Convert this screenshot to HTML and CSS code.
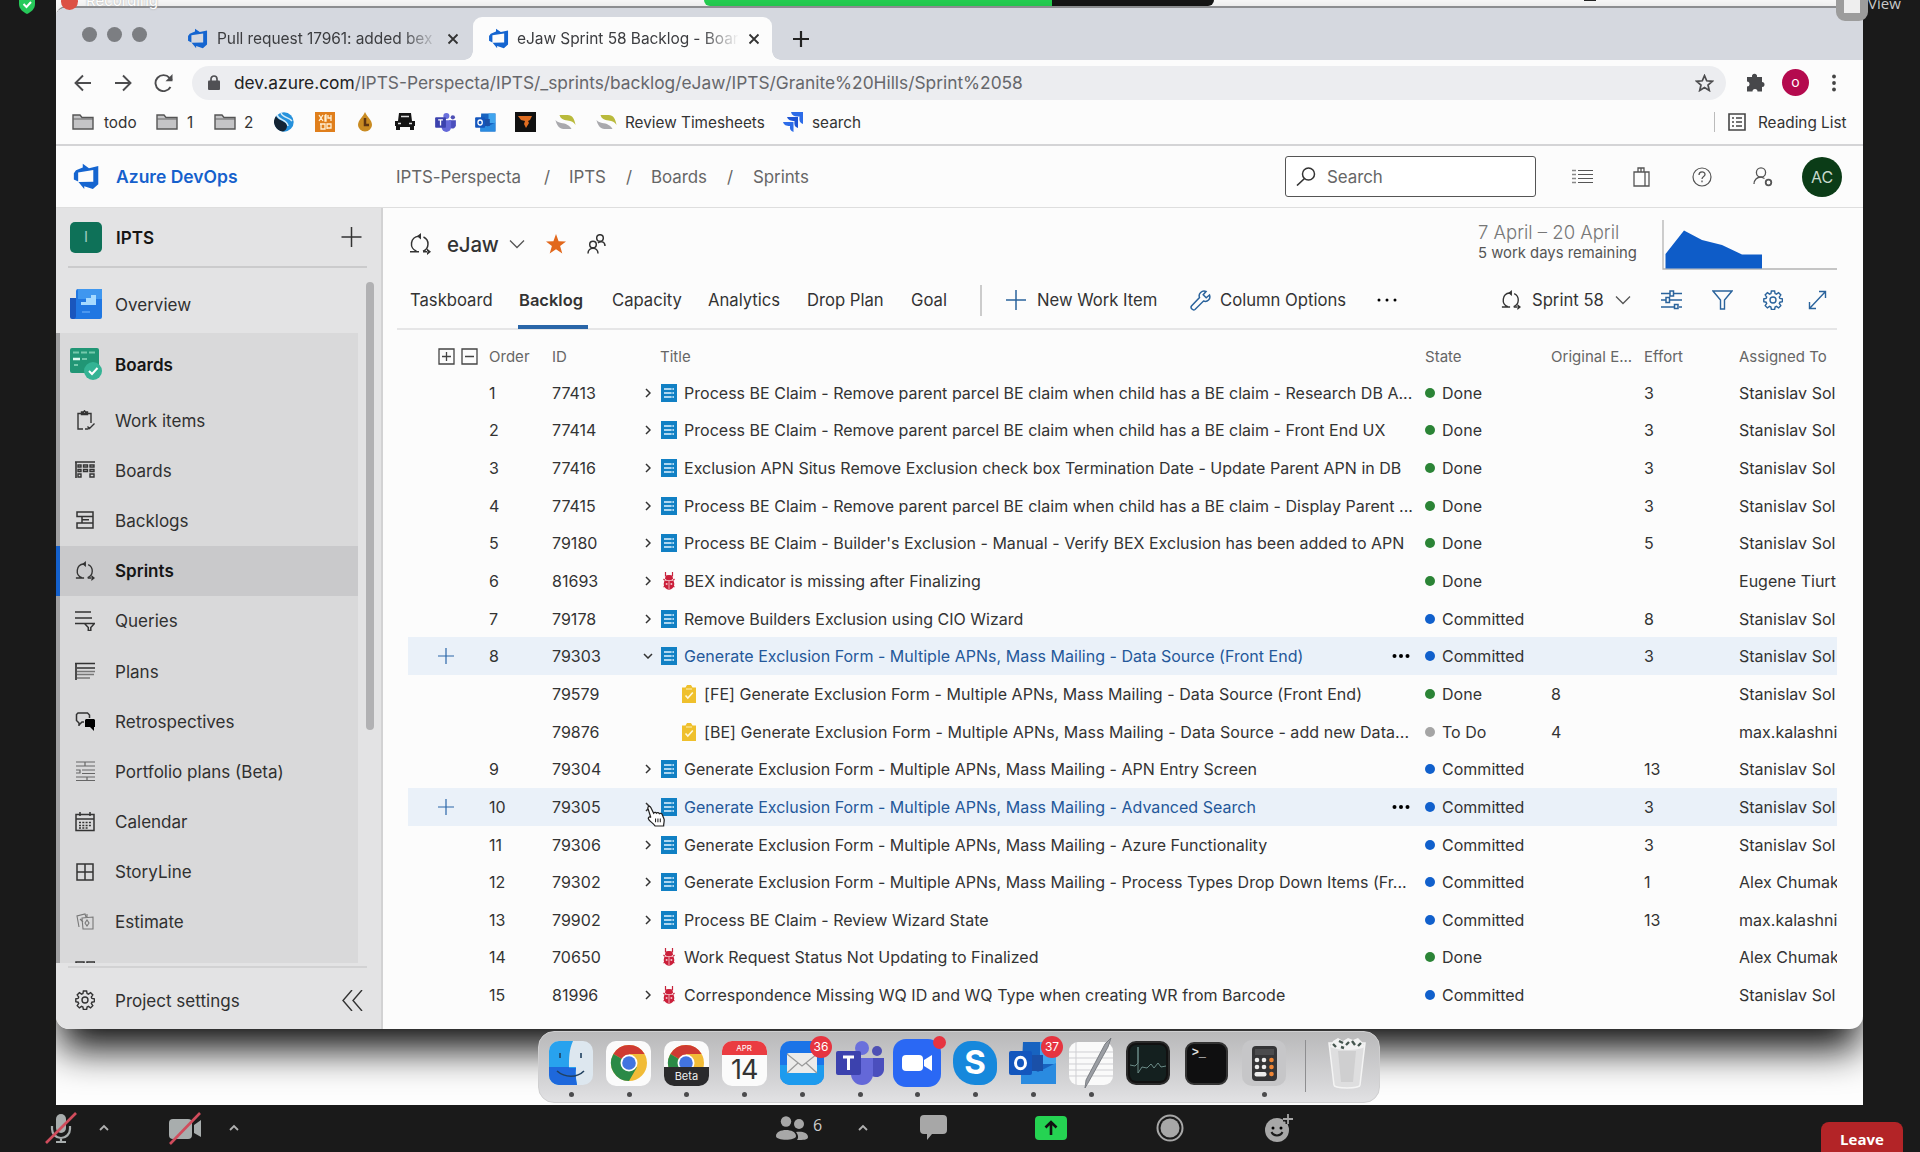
FILE: index.html
```html
<!DOCTYPE html>
<html lang="en">
<head>
<meta charset="utf-8">
<title>eJaw Sprint 58 Backlog - Boards</title>
<link rel="stylesheet" href="styles.css">
</head>
<body>
<svg class="defs" width="0" height="0">
  <symbol id="azure" viewBox="0 0 20 20"><path fill="#1565d0" d="M1 7.5 2.6 5.4 7.6 3.3V.6l4.6 3.3 6.9-1.6v13.4l-4 3.6-6.4-2.1v2.1L4.4 14l11-.2V5.2L4.2 7v6.7L1 12.2z"/></symbol>
  <symbol id="x" viewBox="0 0 12 12"><path d="M1.5 1.5l9 9m0-9l-9 9" stroke="currentColor" stroke-width="1.8" fill="none"/></symbol>
  <symbol id="plus" viewBox="0 0 20 20"><path d="M10 0v20M0 10h20" stroke="currentColor" stroke-width="1.5" fill="none"/></symbol>
  <symbol id="folder" viewBox="0 0 22 18"><path d="M1 16V2h7l2 2.5h11V16z" fill="#c4c4c6" stroke="#555" stroke-width="1.4"/><path d="M1 6h20" stroke="#666"/></symbol>
  <symbol id="sprint" viewBox="0 0 22 22"><g fill="none" stroke="currentColor" stroke-width="1.500"><path d="M1 18.700h9M7.500 18.200A7.700 7.700 0 0 1 9.500 3.300h2M14.500 4A7.700 7.700 0 0 1 14 18.200"/></g><path d="M8 3.300L12 0v6.600zM22 18.700l-4-3.300v6.600zM14 18h4.500v1.500H14z" fill="currentColor"/></symbol>
  <symbol id="down" viewBox="0 0 16 10"><path d="M1 1.500l7 7 7-7" fill="none" stroke="#555" stroke-width="1.300"/></symbol>
  <symbol id="rt" viewBox="0 0 6 10"><path d="M1 1l4 4-4 4" fill="none" stroke="currentColor" stroke-width="1.500"/></symbol>
  <symbol id="up" viewBox="0 0 10 7"><path d="M1 6l4-4 4 4" fill="none" stroke="#b0b0b0" stroke-width="1.800"/></symbol>
  <symbol id="pbi" viewBox="0 0 16 18"><path fill="#1180c4" d="M0 0h16v18H0z"/><path d="M3 5h10M3 9h10M3 13h10" stroke="#e2f3ff" stroke-width="1.500"/><path d="M11 3.500v11" stroke="#1180c4" stroke-width=".8"/></symbol>
  <symbol id="bug" viewBox="0 0 16 18"><g stroke="#c6243c" fill="none" stroke-width="1.200"><path d="M4.500 0v4h7V0M2.500 7l2 2M13.500 7l-2 2M2.500 15l2-1m9 1-2-1"/></g><ellipse cx="8" cy="12" rx="5.300" ry="5.800" fill="#cb1f3a"/><path fill="#cb1f3a" d="M4 7a4 4 0 0 1 8 0z"/><path d="M3.500 8.500h9M8 9v8" stroke="#f0b4bd" stroke-width=".9"/><circle cx="5.600" cy="12" r="1" fill="#f3bfc7"/><circle cx="10.400" cy="12" r="1" fill="#f3bfc7"/></symbol>
  <symbol id="task" viewBox="0 0 14 18"><path fill="#efc02c" d="M0 2.500h3.500L5 0h4l1.500 2.500H14V18H0z"/><path d="M3.500 10.500l2.300 2.500 5-5.500" fill="none" stroke="#fff8dc" stroke-width="1.600"/><path d="M4 4h6" stroke="#fae6a0" stroke-width="1.200"/></symbol>
  <symbol id="gear" viewBox="0 0 20 20"><path fill="none" stroke="currentColor" stroke-width="1.400" d="M8.400 1h3.200l.5 2.600 1.300.5 2.200-1.500 2.200 2.300-1.500 2.100.6 1.400 2.500.4v2.900l-2.500.5-.6 1.300 1.500 2.200-2.200 2.200-2.200-1.500-1.300.6-.5 2.500H8.400l-.5-2.500-1.300-.6-2.200 1.500-2.200-2.200 1.500-2.200-.6-1.300L.8 11.700V8.800l2.300-.4.600-1.400-1.500-2.100 2.200-2.300 2.200 1.500 1.300-.5z"/><circle cx="10" cy="10" r="3" fill="none" stroke="currentColor" stroke-width="1.400"/></symbol>
  <symbol id="chrome" viewBox="-20 -20 40 40"><circle r="18" fill="#f1bb37"/><path d="M0 0L-15.600-9A18 18 0 0 1 15.600-9H0z" fill="#cf3a32"/><path d="M0 0L-15.600-9A18 18 0 0 0 0 18L7.800 4.500z" fill="#2b8a47"/><circle r="8.500" fill="#fff"/><circle r="6.800" fill="#4274e0"/></symbol>
  <symbol id="teams" viewBox="0 0 48 44"><circle cx="26" cy="7" r="7" fill="#6a70dc"/><circle cx="41" cy="10" r="5" fill="#4e50b4"/><path d="M32 17h16v12a8 8 0 0 1-12 6z" fill="#4b4fbd"/><path d="M15 17h22v16a11 11 0 0 1-22 0z" fill="#6468d8"/><rect y="10" width="25" height="24" rx="2" fill="#3c42ae"/><path d="M7 16h11M12.500 16v13" stroke="#fff" stroke-width="3"/></symbol>
  <symbol id="outlook" viewBox="0 0 48 44"><path fill="#1763c0" d="M14 1h33v42H12z"/><path fill="#41a5ee" d="M31 1h16v22H31z"/><path fill="#2a8be0" d="M12 22l17 9 18-9v21H12z"/><path fill="#1a50a8" d="M20 14h14v16H20z"/><rect y="10" width="23" height="24" rx="2" fill="#1356bd"/><ellipse cx="11.500" cy="22" rx="5" ry="5.800" fill="none" stroke="#fff" stroke-width="3"/></symbol>
  <symbol id="swoosh" viewBox="0 0 20 14"><path d="M0 5c3 4 8 2 12 5 2 1 3 2 4 4H8C4 14 1 10 0 5z" fill="#a9a9ad"/><path d="M4 0h8c5 0 7 4 8 10-2-3-4-4-8-4.500C8 5 5 4 4 0z" fill="#b9ba3c"/></symbol>
  <symbol id="calico" viewBox="0 0 20 20"><path d="M1 2.500h18v16H1zM1 7h18M5 0v4M15 0v4" fill="none" stroke="currentColor" stroke-width="1.500"/><path d="M4 10.500h12M4 13.500h12M4 16h9" stroke="currentColor" stroke-width="1.300" stroke-dasharray="2 1.300"/></symbol>
</svg>

<div class="screen">
  <aside class="edge edge-left">
    <svg class="shield" width="16" height="14" viewBox="0 0 16 14"><path d="M0 0h16v4c0 5-4 8-8 10-4-2-8-5-8-10z" fill="#27c95a"/><path d="M4.500 4l3 3L12 2" fill="none" stroke="#fff" stroke-width="2"/></svg>
  </aside>

  <main class="desktop">
    <div class="menubar"><span class="share-green"></span><span class="share-dark"></span></div>
    <span class="rec-dot"></span><span class="rec-text">Recording</span><span class="notch"></span>
    <section class="window">
      <div class="tabs-strip">
        <i class="light"></i><i class="light"></i><i class="light"></i>
        <div class="tab tab-idle"><svg width="21" height="21"><use href="#azure"/></svg><span class="tab-text">Pull request 17961: added bex</span><svg class="close" width="12" height="12"><use href="#x"/></svg></div>
        <div class="tab tab-on"><svg width="21" height="21"><use href="#azure"/></svg><span class="tab-text">eJaw Sprint 58 Backlog - Boards</span><svg class="close" width="12" height="12"><use href="#x"/></svg></div>
        <svg class="newtab" width="16" height="16" viewBox="0 0 16 16"><path d="M8 0v16M0 8h16" stroke="#222" stroke-width="2.200"/></svg>
      </div>

      <div class="toolbar">
        <svg width="18" height="18" viewBox="0 0 18 18"><path d="M17 9H2M9 1.500L1.500 9 9 16.500" fill="none" stroke="#4c4c4e" stroke-width="1.900"/></svg>
        <svg width="18" height="18" viewBox="0 0 18 18"><path d="M1 9h15M9 1.500L16.500 9 9 16.500" fill="none" stroke="#4c4c4e" stroke-width="1.900"/></svg>
        <svg width="20" height="18" viewBox="0 0 20 18"><path d="M16.500 13A8 8 0 1 1 15.500 3.800L18 6" fill="none" stroke="#4c4c4e" stroke-width="1.900"/><path d="M18.500 0v7.200h-7z" fill="#4c4c4e"/></svg>
        <div class="url">
          <svg width="12" height="15" viewBox="0 0 12 15"><rect y="5.500" width="12" height="9.500" rx="1" fill="#505054"/><path d="M3 6V4a3 3 0 0 1 6 0v2" fill="none" stroke="#505054" stroke-width="1.700"/></svg>
          <span class="url-text"><b>dev.azure.com</b>/IPTS-Perspecta/IPTS/_sprints/backlog/eJaw/IPTS/Granite%20Hills/Sprint%2058</span>
          <svg class="fav" width="19" height="18" viewBox="0 0 19 18"><path d="M9.500 1.600l2.200 5.200 5.600.5-4.300 3.700 1.300 5.500-4.800-3-4.800 3L6 11 1.700 7.300l5.600-.5z" fill="none" stroke="#4c4c4e" stroke-width="1.700"/></svg>
        </div>
        <svg width="19" height="19" viewBox="0 0 19 19"><path fill="#47484b" d="M1 4h5a2.600 2.600 0 1 1 5 0h5v5a2.400 2.400 0 1 1 0 5v4.500h-4.500a2.400 2.400 0 1 0-5 0H1V13.500a2.400 2.400 0 1 0 0-5z"/></svg>
        <span class="profile">o</span>
        <svg width="4" height="18" viewBox="0 0 4 18"><circle cx="2" cy="2.500" r="1.900" fill="#444"/><circle cx="2" cy="9" r="1.900" fill="#444"/><circle cx="2" cy="15.500" r="1.900" fill="#444"/></svg>
      </div>

      <div class="bookmarks">
        <svg width="22" height="18"><use href="#folder"/></svg><span>todo</span>
        <svg width="22" height="18"><use href="#folder"/></svg><span>1</span>
        <svg width="22" height="18"><use href="#folder"/></svg><span>2</span>
        <svg width="20" height="20" viewBox="0 0 20 20"><circle cx="10" cy="10" r="9.700" fill="#2591dc"/><path d="M2 4c2 5 11 5 11 10 0 3-2 5-4 5.500A9.700 9.700 0 0 1 2 4z" fill="#142434"/><path d="M3 3c2 6 10 4 11 11M7 1c2 5 8 4 11 8" fill="none" stroke="#d6ecf8" stroke-width="1.500"/></svg>
        <svg width="20" height="20" viewBox="0 0 20 20"><path fill="#e07f1c" d="M0 0h20v20H0z"/><path d="M4 3l4 6M8 3L4 9M10 3v6h1V3h-1M13 3v3h3m0-3v6M5 12h5v5H6v-5M12 17v-5h4v4h-4" fill="none" stroke="#fff0d4" stroke-width="1.300"/></svg>
        <svg width="14" height="20" viewBox="0 0 14 20"><path d="M7 0c2 5 7 8 7 13a7 6.500 0 0 1-14 0C0 8 5 5 7 0z" fill="#c98b22"/><path d="M7 6v7h4" stroke="#5d3512" stroke-width="2.500" fill="none"/></svg>
        <svg width="20" height="18" viewBox="0 0 20 18"><path d="M4 0h12l1 8h3v5h-1v4h-4v-3H5v3H1v-4H0V8h3z" fill="#151515"/><path d="M6 3.500h8M3 10.500h3m8 0h3" stroke="#ddd" stroke-width="1.500"/></svg>
        <svg width="21" height="19"><use href="#teams"/></svg>
        <svg width="21" height="19"><use href="#outlook"/></svg>
        <svg width="21" height="20" viewBox="0 0 21 20"><path fill="#111" d="M0 0h21v20H0z"/><path fill="#e06d21" d="M3 4h14l-2 4-2 1 1 2-3 5-2-4 1-3-4-1z"/></svg>
        <svg width="21" height="14"><use href="#swoosh"/></svg>
        <svg width="21" height="14"><use href="#swoosh"/></svg><span class="bm-rt">Review Timesheets</span>
        <svg width="20" height="20" viewBox="0 0 20 20"><path fill="#2d6ce8" d="M8 0h12v12c-3-1-4-3-3.500-7.500C12 5 9 4 8 0z"/><path fill="#1f55d4" d="M4 5h11v11c-3-1-4-3-3.500-7C8 9 5 8 4 5z"/><path fill="#2d6ce8" d="M0 10h10.500v10c-3-1-4-3-3.500-6C3 14 1 13 0 10z"/></svg><span class="bm-search">search</span>
        <i class="bm-sep"></i>
        <svg width="18" height="18" viewBox="0 0 18 18"><path d="M1 1h16v16H1z" fill="none" stroke="#444" stroke-width="1.600"/><path d="M4 5h2m2 0h6M4 9h2m2 0h6M4 13h2m2 0h6" stroke="#444" stroke-width="1.600"/></svg><span class="bm-read">Reading List</span>
      </div>

      <header class="az-header">
        <svg width="28" height="27"><use href="#azure"/></svg>
        <strong class="az-name">Azure DevOps</strong>
        <span>IPTS-Perspecta</span><span>/</span><span>IPTS</span><span>/</span><span>Boards</span><span>/</span><span>Sprints</span>
        <div class="search"><svg width="20" height="19" viewBox="0 0 20 19"><circle cx="12.500" cy="7" r="6" fill="none" stroke="#333" stroke-width="1.500"/><path d="M8.500 11.500L1 18.500" stroke="#333" stroke-width="1.600"/></svg><span>Search</span></div>
        <svg width="21" height="15" viewBox="0 0 21 15"><path d="M6 1.500h15M6 5.500h15M6 9.500h15M6 13.500h15" stroke="#555" stroke-width="1.200"/><path d="M0 1.500h4M0 5.500h4M0 9.500h4M0 13.500h4" stroke="#888" stroke-width="1.400"/></svg>
        <svg width="17" height="20" viewBox="0 0 17 20"><path d="M1 5h15v14H1zM5 5V1h6v4M8 5V1M12 5v14" fill="none" stroke="#555" stroke-width="1.300"/></svg>
        <svg width="20" height="20" viewBox="0 0 20 20"><circle cx="10" cy="10" r="9" fill="none" stroke="#555" stroke-width="1.200"/><path d="M7 8c0-4 6-4 6-.5 0 2-3 2-3 4.500m0 1.500v1.800" fill="none" stroke="#555" stroke-width="1.300"/></svg>
        <svg width="20" height="20" viewBox="0 0 20 20"><circle cx="8" cy="5.500" r="4.600" fill="none" stroke="#555" stroke-width="1.300"/><path d="M1 17c0-4 3-7 7-7l3.500 1.500" fill="none" stroke="#555" stroke-width="1.300"/><circle cx="15.500" cy="15.500" r="2.800" fill="none" stroke="#555" stroke-width="1.800"/></svg>
        <span class="avatar">AC</span>
      </header>

      <div class="body">
        <nav class="sidebar">
          <div class="project"><span class="badge-i">I</span><strong>IPTS</strong><svg width="21" height="20"><use href="#plus"/></svg></div>
          <div class="nav-scroll">
            <div class="nav-list">
              <a class="nav-overview"><svg width="32" height="30" viewBox="0 0 32 30"><path fill="#1a56bd" d="M0 9h12v21H2a2 2 0 0 1-2-2z"/><path fill="#2077e2" d="M6 2a2 2 0 0 1 2-2h24v28a2 2 0 0 1-2 2H4c2-1 2-2 2-4z"/><path fill="#3f97ef" d="M8 0h24v10H8z"/><path fill="#a6daff" d="M11 16v-3h5v-4h5V6h5v10z"/><path stroke="#4a97f0" stroke-width="2" d="M12 23h8"/></svg><span>Overview</span></a>
              <div class="nav-group">
                <a class="nav-head"><svg width="33" height="32" viewBox="0 0 33 32"><rect width="29" height="25" rx="2" fill="#219675"/><path d="M3 4.500h6m2 0h6m2 0h6M12 11h5M4 17h4" stroke="#74c9ac" stroke-width="2"/><path d="M3 11h7" stroke="#dffaf0" stroke-width="2.500"/><circle cx="23" cy="23" r="9" fill="#34b394"/><path d="M19 23l3 3 5.500-6" fill="none" stroke="#fff" stroke-width="2"/></svg><strong>Boards</strong></a>
                <a class="nav-item"><svg width="20" height="20" viewBox="0 0 20 20"><path d="M8 19H3V3.500h13V13M6.500 4V2h2l1-1.200 1 1.200h2v2.500h-6zM10 19h3.500M12.500 16.500l2 2 5-5" fill="none" stroke="currentColor" stroke-width="1.400"/></svg><span>Work items</span></a>
                <a class="nav-item"><svg width="20" height="20" viewBox="0 0 20 20"><path d="M0 2h20M1 2v16" stroke="currentColor" stroke-width="1.600"/><path d="M3 5h3v2H3zM8.500 5h4v2h-4zM15 5h4v2h-4zM3 9.500h3v2H3zM8.500 9.500h4v2h-4zM15 9.500h4v2h-4zM3 14h3v3H3zM15 14h4v3h-4z" fill="none" stroke="currentColor" stroke-width="1.400"/></svg><span>Boards</span></a>
                <a class="nav-item"><svg width="20" height="20" viewBox="0 0 20 20"><path d="M2 2h16v4.500H2zM7 6.500h11V13H7zM2 13h16v5H2zM7 9.700h7" fill="none" stroke="currentColor" stroke-width="1.500"/></svg><span>Backlogs</span></a>
                <a class="nav-item nav-on"><svg width="20" height="20"><use href="#sprint"/></svg><strong>Sprints</strong></a>
                <a class="nav-item"><svg width="20" height="20" viewBox="0 0 20 20"><path d="M0 1h16M0 7h17M0 12.500h9M9.500 12.500h10l-3.700 4v3h-2.500v-3z" fill="none" stroke="currentColor" stroke-width="1.500"/></svg><span>Queries</span></a>
                <a class="nav-item"><svg width="20" height="20" viewBox="0 0 20 20"><path d="M0 2.500h20M1 2.500V19M2 7h18" fill="none" stroke="currentColor" stroke-width="1.700"/><path d="M2 10.500h18M2 13.500h17M2 17h13" stroke="#777" stroke-width="1.300"/></svg><span>Plans</span></a>
                <a class="nav-item"><svg width="20" height="20" viewBox="0 0 20 20"><path d="M4 15v-3L1.500 9.500V3.500L3 2h9.500L14.500 4v3M4 14l3-3h2" fill="none" stroke="currentColor" stroke-width="1.500"/><path d="M11 8h8l1 1v7h-1v4l-4-4h-5V9z" fill="#000"/></svg><span>Retrospectives</span></a>
                <a class="nav-item"><svg width="20" height="20" viewBox="0 0 20 20"><path d="M1 1h19M1 5h19M7 9h13M7 12.500h13M1 16h19M1 19.500h19M10 1v4M1 9h4v3H1M12 16v3" fill="none" stroke="#666" stroke-width="1.200"/></svg><span>Portfolio plans (Beta)</span></a>
                <a class="nav-item"><svg width="20" height="20"><use href="#calico"/></svg><span>Calendar</span></a>
                <a class="nav-item"><svg width="20" height="20" viewBox="0 0 20 20"><path d="M2 2h16v16H2zM10 2v16M2 10h16" fill="none" stroke="currentColor" stroke-width="1.500"/></svg><span>StoryLine</span></a>
                <a class="nav-item"><svg width="20" height="20" viewBox="0 0 20 20"><path d="M4 15L2 4l8-2 1 3M7 6l11-1v12H8zM12 5V2M5 7l3 3M10 11l2-3 2 3-2 3z" fill="none" stroke="#777" stroke-width="1.100"/></svg><span>Estimate</span></a>
                <a class="nav-item nav-cut"><svg width="20" height="20" viewBox="0 0 20 20"><path d="M1 1h8v8H1zM12 1h8v8h-8z" fill="none" stroke="currentColor" stroke-width="1.500"/></svg></a>
              </div>
            </div>
            <i class="scrollbar"></i>
          </div>
          <div class="settings"><svg width="20" height="20"><use href="#gear"/></svg><span>Project settings</span><svg width="21" height="21" viewBox="0 0 21 21"><path d="M10 0L1 10.500 10 21M20 0l-9 10.500L20 21" fill="none" stroke="currentColor" stroke-width="1.400"/></svg></div>
        </nav>

        <section class="page">
          <div class="title-row">
            <svg width="22" height="22"><use href="#sprint"/></svg><h1>eJaw</h1><svg width="16" height="10"><use href="#down"/></svg>
            <svg width="20" height="20" viewBox="0 0 20 20"><path d="M10 0l2.600 7.200 7.400.2-5.900 4.600 2.200 7.500L10 15.200l-6.300 4.300L5.900 12 0 7.400l7.400-.2z" fill="#e2681c"/></svg>
            <svg width="19" height="20" viewBox="0 0 19 20"><g fill="none" stroke="#333" stroke-width="1.500"><circle cx="6" cy="10.500" r="3.300"/><path d="M1 19.500c0-7 10-7 10 0M18 12c0-5-5-5-7-3"/><circle cx="13" cy="4" r="3.300"/></g></svg>
            <div class="dates"><span class="range">7 April – 20 April</span><span class="remain">5 work days remaining</span></div>
            <svg width="176" height="52" viewBox="0 0 176 52"><path d="M1 2v49h174" fill="none" stroke="#b3b3b3" stroke-width="1.300"/><path d="M3.500 50.500V36L22 12.500l18 9.500 20 5 20 9.500h20v14z" fill="#0e5cc8"/></svg>
          </div>
          <div class="tab-row">
            <span>Taskboard</span><strong>Backlog</strong><span>Capacity</span><span>Analytics</span><span>Drop Plan</span><span>Goal</span><i class="sep"></i>
            <svg class="blue" width="20" height="20"><use href="#plus"/></svg><span>New Work Item</span>
            <svg class="blue" width="21" height="21" viewBox="0 0 21 21"><path d="M19.500 5l-3.300 2.800-3-3L16 1.500c-4-1.500-8 2-6.500 6L1.500 16c-1.500 2 1.500 5 3.500 3.500L13.500 11c4 1.500 7.500-2 6-6z" fill="none" stroke="currentColor" stroke-width="1.500"/></svg><span>Column Options</span>
            <svg width="20" height="4" viewBox="0 0 20 4"><circle cx="2" cy="2" r="1.500"/><circle cx="10" cy="2" r="1.500"/><circle cx="18" cy="2" r="1.500"/></svg>
            <svg width="20" height="20"><use href="#sprint"/></svg><span>Sprint 58</span><svg width="16" height="10"><use href="#down"/></svg>
            <svg class="blue" width="21" height="20" viewBox="0 0 21 20"><path d="M0 3.500h9m4 0h8M0 10h5m4 0h12M0 17h13m5 0h3M9 1h3.500v5H9zM5 7.500h3.500v5H5zM13.500 14.500H17v4h-3.500z" fill="none" stroke="currentColor" stroke-width="1.500"/></svg>
            <svg class="blue" width="21" height="20" viewBox="0 0 21 20"><path d="M1 1h19l-7.500 9v9H8.500v-9z" fill="none" stroke="currentColor" stroke-width="1.400"/></svg>
            <svg class="blue" width="20" height="20"><use href="#gear"/></svg>
            <svg class="blue" width="19" height="20" viewBox="0 0 19 20"><path d="M1.500 18.500l16-17M11 1.500h6.500V8M1.500 12v6.500H8" fill="none" stroke="currentColor" stroke-width="1.400"/></svg>
          </div>
          <div class="table">
            <div class="row head"><svg class="c-plus" width="17" height="17" viewBox="0 0 17 17"><path d="M1 1h15v15H1zM8.500 4v9M4 8.500h9" fill="none" stroke="#444" stroke-width="1.300"/></svg><svg class="c-minus" width="17" height="17" viewBox="0 0 17 17"><path d="M1 1h15v15H1zM4 8.500h9" fill="none" stroke="#444" stroke-width="1.300"/></svg><span class="c-order">Order</span><span class="c-id">ID</span><span class="c-title">Title</span><span class="c-state">State</span><span class="c-orig">Original E...</span><span class="c-eff">Effort</span><span class="c-who">Assigned To</span></div>

            <div class="row"><span class="c-order">1</span><span class="c-id">77413</span><span class="c-title"><svg class="exp" width="6" height="10"><use href="#rt"/></svg><svg width="16" height="18"><use href="#pbi"/></svg><span>Process BE Claim - Remove parent parcel BE claim when child has a BE claim - Research DB A...</span></span><span class="c-state done">Done</span><span class="c-eff">3</span><span class="c-who">Stanislav Sol</span></div>
            <div class="row"><span class="c-order">2</span><span class="c-id">77414</span><span class="c-title"><svg class="exp" width="6" height="10"><use href="#rt"/></svg><svg width="16" height="18"><use href="#pbi"/></svg><span>Process BE Claim - Remove parent parcel BE claim when child has a BE claim - Front End UX</span></span><span class="c-state done">Done</span><span class="c-eff">3</span><span class="c-who">Stanislav Sol</span></div>
            <div class="row"><span class="c-order">3</span><span class="c-id">77416</span><span class="c-title"><svg class="exp" width="6" height="10"><use href="#rt"/></svg><svg width="16" height="18"><use href="#pbi"/></svg><span>Exclusion APN Situs Remove Exclusion check box Termination Date - Update Parent APN in DB</span></span><span class="c-state done">Done</span><span class="c-eff">3</span><span class="c-who">Stanislav Sol</span></div>
            <div class="row"><span class="c-order">4</span><span class="c-id">77415</span><span class="c-title"><svg class="exp" width="6" height="10"><use href="#rt"/></svg><svg width="16" height="18"><use href="#pbi"/></svg><span>Process BE Claim - Remove parent parcel BE claim when child has a BE claim - Display Parent ...</span></span><span class="c-state done">Done</span><span class="c-eff">3</span><span class="c-who">Stanislav Sol</span></div>
            <div class="row"><span class="c-order">5</span><span class="c-id">79180</span><span class="c-title"><svg class="exp" width="6" height="10"><use href="#rt"/></svg><svg width="16" height="18"><use href="#pbi"/></svg><span>Process BE Claim - Builder's Exclusion - Manual - Verify BEX Exclusion has been added to APN</span></span><span class="c-state done">Done</span><span class="c-eff">5</span><span class="c-who">Stanislav Sol</span></div>
            <div class="row"><span class="c-order">6</span><span class="c-id">81693</span><span class="c-title"><svg class="exp" width="6" height="10"><use href="#rt"/></svg><svg width="16" height="18"><use href="#bug"/></svg><span>BEX indicator is missing after Finalizing</span></span><span class="c-state done">Done</span><span class="c-who">Eugene Tiurt</span></div>
            <div class="row"><span class="c-order">7</span><span class="c-id">79178</span><span class="c-title"><svg class="exp" width="6" height="10"><use href="#rt"/></svg><svg width="16" height="18"><use href="#pbi"/></svg><span>Remove Builders Exclusion using CIO Wizard</span></span><span class="c-state committed">Committed</span><span class="c-eff">8</span><span class="c-who">Stanislav Sol</span></div>
            <div class="row lit"><svg class="c-plus" width="16" height="16"><use href="#plus"/></svg><span class="c-order">8</span><span class="c-id">79303</span><span class="c-title"><svg class="exp turned" width="6" height="10"><use href="#rt"/></svg><svg width="16" height="18"><use href="#pbi"/></svg><span>Generate Exclusion Form - Multiple APNs, Mass Mailing - Data Source (Front End)</span></span><svg class="c-more" width="18" height="4" viewBox="0 0 18 4"><circle cx="2.500" cy="2" r="2"/><circle cx="9" cy="2" r="2"/><circle cx="15.500" cy="2" r="2"/></svg><span class="c-state committed">Committed</span><span class="c-eff">3</span><span class="c-who">Stanislav Sol</span></div>
            <div class="row child"><span class="c-id">79579</span><span class="c-title"><svg width="14" height="18"><use href="#task"/></svg><span>[FE] Generate Exclusion Form - Multiple APNs, Mass Mailing - Data Source (Front End)</span></span><span class="c-state done">Done</span><span class="c-orig">8</span><span class="c-who">Stanislav Sol</span></div>
            <div class="row child"><span class="c-id">79876</span><span class="c-title"><svg width="14" height="18"><use href="#task"/></svg><span>[BE] Generate Exclusion Form - Multiple APNs, Mass Mailing - Data Source - add new Data...</span></span><span class="c-state todo">To Do</span><span class="c-orig">4</span><span class="c-who">max.kalashni</span></div>
            <div class="row"><span class="c-order">9</span><span class="c-id">79304</span><span class="c-title"><svg class="exp" width="6" height="10"><use href="#rt"/></svg><svg width="16" height="18"><use href="#pbi"/></svg><span>Generate Exclusion Form - Multiple APNs, Mass Mailing - APN Entry Screen</span></span><span class="c-state committed">Committed</span><span class="c-eff">13</span><span class="c-who">Stanislav Sol</span></div>
            <div class="row lit"><svg class="c-plus" width="16" height="16"><use href="#plus"/></svg><span class="c-order">10</span><span class="c-id">79305</span><span class="c-title"><svg class="exp" width="6" height="10"><use href="#rt"/></svg><svg width="16" height="18"><use href="#pbi"/></svg><span>Generate Exclusion Form - Multiple APNs, Mass Mailing - Advanced Search</span>
              <svg class="hand" width="19" height="23" viewBox="0 0 20 24"><path d="M4 13L1 3.500C.5 1 3 .5 4 2.500l3 6c1-1.500 2.500-1 3 0 1-1 2.500-.5 3 .5 1-.8 2.500-.3 3 .8l2 5c.5 2-.5 4-.5 7.200H8.500C7 19 2 17 1.500 14.500 1 12.500 3 12 4 13z" fill="#fff" stroke="#222" stroke-width="1.300"/><path d="M9 14v4m2.500-4v4m2.500-4v4" stroke="#222" stroke-width="1.100"/></svg></span><svg class="c-more" width="18" height="4" viewBox="0 0 18 4"><circle cx="2.500" cy="2" r="2"/><circle cx="9" cy="2" r="2"/><circle cx="15.500" cy="2" r="2"/></svg><span class="c-state committed">Committed</span><span class="c-eff">3</span><span class="c-who">Stanislav Sol</span></div>
            <div class="row"><span class="c-order">11</span><span class="c-id">79306</span><span class="c-title"><svg class="exp" width="6" height="10"><use href="#rt"/></svg><svg width="16" height="18"><use href="#pbi"/></svg><span>Generate Exclusion Form - Multiple APNs, Mass Mailing - Azure Functionality</span></span><span class="c-state committed">Committed</span><span class="c-eff">3</span><span class="c-who">Stanislav Sol</span></div>
            <div class="row"><span class="c-order">12</span><span class="c-id">79302</span><span class="c-title"><svg class="exp" width="6" height="10"><use href="#rt"/></svg><svg width="16" height="18"><use href="#pbi"/></svg><span>Generate Exclusion Form - Multiple APNs, Mass Mailing - Process Types Drop Down Items (Fr...</span></span><span class="c-state committed">Committed</span><span class="c-eff">1</span><span class="c-who">Alex Chumak</span></div>
            <div class="row"><span class="c-order">13</span><span class="c-id">79902</span><span class="c-title"><svg class="exp" width="6" height="10"><use href="#rt"/></svg><svg width="16" height="18"><use href="#pbi"/></svg><span>Process BE Claim - Review Wizard State</span></span><span class="c-state committed">Committed</span><span class="c-eff">13</span><span class="c-who">max.kalashni</span></div>
            <div class="row"><span class="c-order">14</span><span class="c-id">70650</span><span class="c-title leaf"><svg width="16" height="18"><use href="#bug"/></svg><span>Work Request Status Not Updating to Finalized</span></span><span class="c-state done">Done</span><span class="c-who">Alex Chumak</span></div>
            <div class="row"><span class="c-order">15</span><span class="c-id">81996</span><span class="c-title"><svg class="exp" width="6" height="10"><use href="#rt"/></svg><svg width="16" height="18"><use href="#bug"/></svg><span>Correspondence Missing WQ ID and WQ Type when creating WR from Barcode</span></span><span class="c-state committed">Committed</span><span class="c-who">Stanislav Sol</span></div>
          </div>
        </section>
      </div>
    </section>

    <div class="dock">
      <span class="app run"><svg width="46" height="46" viewBox="0 0 46 46"><rect x="1" y="1" width="44" height="44" rx="10" fill="#dde7ef"/><path d="M11 1h14c-4 9-4 17-4 26h7c-1 6 0 12 1 18H11A10 10 0 0 1 1 35V11A10 10 0 0 1 11 1z" fill="#28a2ee"/><path d="M1 27h20v1h7c-1 6 0 12 1 17H11A10 10 0 0 1 1 35z" fill="#1e68dc"/><path d="M12 13v5M33 13v5M9 31c8 7 20 7 27 0" stroke="#20405f" stroke-width="1.600" fill="none"/></svg></span>
      <span class="app run"><span class="tile"><svg width="40" height="40"><use href="#chrome"/></svg></span></span>
      <span class="app run"><span class="tile beta"><svg width="40" height="40"><use href="#chrome"/></svg><em>Beta</em></span></span>
      <span class="app run"><span class="tile cal"><em>APR</em><b>14</b></span></span>
      <span class="app run"><svg width="46" height="46" viewBox="0 0 46 46"><rect x="1" y="1" width="44" height="44" rx="10" fill="#1b74e8"/><path d="M1 25h44v10a10 10 0 0 1-10 10H11A10 10 0 0 1 1 35z" fill="#1d9bee"/><rect x="8" y="13" width="30" height="20" rx="2" fill="#ecebea"/><path d="M8 14l15 12 15-12M8 33l11-10m19 10L27 23" fill="none" stroke="#999" stroke-width="1.200"/></svg><i class="count">36</i></span>
      <span class="app run"><svg width="48" height="44"><use href="#teams"/></svg></span>
      <span class="app run"><svg width="50" height="50" viewBox="0 0 50 50"><rect x="1" y="1" width="48" height="48" rx="13" fill="#2a68f4"/><rect x="10" y="17" width="21" height="16" rx="4" fill="#fff"/><path d="M32 22l8-5v16l-8-5z" fill="#fff"/></svg><i class="count ping"></i></span>
      <span class="app run"><span class="skype">S</span></span>
      <span class="app run"><svg width="48" height="44"><use href="#outlook"/></svg><i class="count">37</i></span>
      <span class="app run"><svg width="46" height="50" viewBox="0 0 46 50"><rect x="1" y="4" width="44" height="43" rx="9" fill="#fafafa"/><path d="M1 14h44M1 20h44M1 26h44M1 32h44M1 38h44M8 4v43" stroke="#cfcfd3"/><path d="M43 0l-3 9-20 36-3 5 1-8L37 6z" fill="#9b9ea4" stroke="#6b6e74" stroke-width=".8"/></svg></span>
      <span class="app"><svg width="44" height="44" viewBox="0 0 44 44"><rect x="1" y="1" width="42" height="42" rx="9" fill="#111" stroke="#2a2a2a" stroke-width="2"/><rect x="4" y="4" width="36" height="36" rx="6" fill="#14201f"/><path d="M4 24l5 1 3-3V6v26l4-6 5 1 4-4 3 4 4-5 3 4 5-1" fill="none" stroke="#6a8a86" stroke-width="1"/></svg></span>
      <span class="app"><span class="term">&gt;_</span></span>
      <span class="app run"><svg width="44" height="46" viewBox="0 0 44 46"><rect width="44" height="46" rx="10" fill="#c6c6c8"/><rect x="10" y="6" width="25" height="35" rx="4" fill="#353537"/><rect x="13" y="9" width="19" height="6" fill="#4b4b4d"/><g fill="#ededed"><circle cx="15" cy="20" r="2.300"/><circle cx="22" cy="20" r="2.300"/><circle cx="15" cy="27" r="2.300"/><circle cx="22" cy="27" r="2.300"/><rect x="12.500" y="32" width="12" height="4.500" rx="2"/></g><g fill="#f08534"><circle cx="29.500" cy="20" r="2.300"/><circle cx="29.500" cy="27" r="2.300"/><circle cx="29.500" cy="34" r="2.300"/></g></svg></span>
      <i class="dock-sep"></i>
      <span class="app trash"><svg width="40" height="52" viewBox="0 0 40 52"><path d="M2 6h36l-5 42c0 4-26 4-26 0z" fill="#dededf" stroke="#f4f4f4" stroke-width="1.500"/><path d="M11 14l3 31h12l3-31z" fill="#cfcfd0"/><path d="M3 10L6 4l5-3 5 3 5-3 5 2 5-2 4 4 3 5c-8 4-26 4-35 0z" fill="#f2f2f2"/><path d="M6 7l3 3M12 4l4 2M19 8l3-3M25 4l3 4M31 9l3-3M14 10l3 1" fill="none" stroke="#45564f" stroke-width="2.400"/></svg></span>
    </div>
  </main>

  <aside class="edge edge-right"><span class="view-box"></span><span class="view-label">View</span></aside>

  <footer class="zoombar">
    <svg width="32" height="34" viewBox="0 0 32 34"><rect x="11" y="3" width="10" height="19" rx="5" fill="#a8adad"/><path d="M7 15v3a9 9 0 0 0 18 0v-3M16 27v4M11 31h10" fill="none" stroke="#a8adad" stroke-width="2.200"/><path d="M1 32L31 2" stroke="#d04c5c" stroke-width="2.600"/></svg>
    <svg width="10" height="7"><use href="#up"/></svg>
    <svg width="34" height="34" viewBox="0 0 34 34"><rect x="1" y="8" width="23" height="20" rx="4" fill="#a8adad"/><path d="M26 14l7-5v17l-7-4z" fill="#a8adad"/><path d="M2 33L32 2" stroke="#d04c5c" stroke-width="2.600"/></svg>
    <svg width="10" height="7"><use href="#up"/></svg>
    <svg width="32" height="24" viewBox="0 0 32 24"><g fill="#a7a7a7"><circle cx="10" cy="5.500" r="5.200"/><circle cx="23" cy="8" r="5"/><path d="M0 20c0-8 20-8 20 0 0 5-20 5-20 0zM21 24c2-3 1-5-1-8 5-1 12 0 12 5 0 3-5 3-11 3z"/></g></svg>
    <span class="people">6</span>
    <svg width="10" height="7"><use href="#up"/></svg>
    <svg width="27" height="25" viewBox="0 0 27 25"><path d="M4 0h19a4 4 0 0 1 4 4v11a4 4 0 0 1-4 4H12l-5 6v-6H4a4 4 0 0 1-4-4V4a4 4 0 0 1 4-4z" fill="#a7a7a7"/></svg>
    <svg width="32" height="24" viewBox="0 0 32 24"><rect width="32" height="24" rx="4" fill="#25d352"/><path d="M16 19V6M10.500 11.500L16 6l5.500 5.500" fill="none" stroke="#111" stroke-width="2.600"/></svg>
    <svg width="28" height="28" viewBox="0 0 28 28"><circle cx="14" cy="14" r="12.500" fill="none" stroke="#a7a7a7" stroke-width="2"/><circle cx="14" cy="14" r="9.500" fill="#a7a7a7"/></svg>
    <svg width="28" height="28" viewBox="0 0 28 28"><circle cx="12" cy="16" r="12" fill="#a7a7a7"/><circle cx="8" cy="14" r="1.500"/><circle cx="16" cy="14" r="1.500"/><path d="M6.500 18c2 4.500 9 4.500 11 0" fill="none" stroke="#1a1a1a" stroke-width="2"/><path d="M23 0v10M18 5h10" stroke="#1a1a1a" stroke-width="5"/><path d="M23 0v10M18 5h10" stroke="#a7a7a7" stroke-width="1.800"/></svg>
    <button class="leave">Leave</button>
  </footer>
</div>
</body>
</html>
```
FILE: styles.css
```css
* { box-sizing: border-box; }
body { margin: 0; background: #1a1a1a; font-family: Inter, "Liberation Sans", sans-serif; color: #333; }
svg { display: block; flex: none; color: #333; }
.defs { position: absolute; }
em, i { font-style: normal; }
strong { font-weight: 600; }

.screen { width: 1920px; height: 1152px; overflow: hidden; display: grid; grid-template: 1105px 47px / 56px 1807px 57px; }
.edge-left { padding-left: 19px; }
.edge-right { position: relative; color: #c9c9c9; font: 15px "Open Sans", sans-serif; }
.view-box { position: absolute; left: -27px; top: -10px; width: 32px; height: 31px; border-radius: 9px; background: #9c9c9c; border: 8px solid #9c9c9c; }
.view-box::after { content: ""; display: block; height: 15px; background: #eee; }
.view-label { position: absolute; left: 5px; top: -7px; line-height: 20px; }

.desktop { position: relative; overflow: hidden; background: #fdfdfd; display: flex; flex-direction: column; }
.menubar { height: 6px; flex: none; display: flex; padding-left: 648px; }
.share-green { width: 348px; height: 6px; background: #25d352; border-radius: 0 0 0 6px; }
.share-dark { width: 162px; height: 6px; background: #161616; border-radius: 0 0 6px 0; }
.rec-dot { position: absolute; z-index: 2; left: 5px; top: -7px; width: 17px; height: 17px; border-radius: 50%; background: #dc5144; }
.rec-text { position: absolute; z-index: 2; left: 30px; top: -9px; font-size: 15px; line-height: 20px; color: #fff; text-shadow: 0 0 2px #999; }
.notch { position: absolute; left: 1528px; top: 0; width: 12px; height: 1px; background: #222; }

.window { height: 1023px; flex: none; border-top: 2px solid #8c8d90; border-radius: 10px 10px 13px 13px; background: #fcfcfc; overflow: hidden; display: flex; flex-direction: column; box-shadow: 0 24px 38px -4px rgba(0,0,0,.95); }

.tabs-strip { height: 52px; flex: none; background: #d5d8df; display: flex; align-items: center; padding-left: 26px; }
.light { width: 15px; height: 15px; margin-right: 10px; border-radius: 50%; background: #7c7e82; }
.tab { display: flex; align-items: center; height: 43px; margin-top: 9px; font-size: 15.500px; color: #3c3d40; letter-spacing: -.07px; }
.tab-idle { width: 316px; padding-left: 30px; }
.tab-on { width: 299px; padding-left: 15px; border-radius: 9px 9px 0 0; background: #fcfcfc; position: relative; }
.tab-on::before, .tab-on::after { content: ""; position: absolute; bottom: 0; width: 9px; height: 9px; }
.tab-on::before { left: -9px; background: radial-gradient(circle at 0 0, transparent 8.500px, #fcfcfc 9px); }
.tab-on::after { right: -9px; background: radial-gradient(circle at 100% 0, transparent 8.500px, #fcfcfc 9px); }
.tab-text { width: 215px; margin-left: 9px; overflow: hidden; white-space: nowrap; -webkit-mask-image: linear-gradient(90deg, #000 185px, transparent 222px); mask-image: linear-gradient(90deg, #000 185px, transparent 222px); }
.tab-on .tab-text { width: 221px; margin-left: 8px; }
.tab .close { margin-left: 15px; }
.tab-on .close { margin-left: 10px; }
.newtab { margin-left: 21px; margin-top: 9px; }

.toolbar { height: 45px; flex: none; display: grid; grid-template-columns: 40px 40px 39px 1553px 29px 57px 10px; align-items: center; padding-left: 18px; }
.url { width: 1534px; height: 34px; border-radius: 17px; background: #ecedf0; display: flex; align-items: center; margin-left: -1px; padding-left: 16px; }
.url-text { flex: 1; margin-left: 14px; font-size: 17.340px; color: #66676b; white-space: nowrap; }
.url-text b { font-weight: 400; color: #222; }
.fav { margin-right: 12px; }
.profile { width: 27px; height: 27px; margin-left: 7px; border-radius: 50%; background: #b40a4e; color: #fff; font-size: 14px; text-align: center; line-height: 26px; }

.bookmarks { height: 41px; flex: none; border-bottom: 2px solid #d4d4d6; padding: 0 0 5px 16px; font-size: 15.300px; white-space: nowrap; align-items: center; display: grid;
  grid-template-columns: 32px 52px 31px 27px 30px 30px 41px 43px 37px 40px 40px 40px 40px 41px 29px 158px 29px 902px 14px 30px 90px; }
.bm-sep { width: 1px; height: 20px; background: #bbb; }

.az-header { height: 62px; flex: none; border-bottom: 1px solid #dedede; padding-left: 16px; display: grid; grid-template-columns: 44px 280px 148px 25px 57px 25px 76px 26px 532px 287px 61px 59px 61px 49px 41px; align-items: center; font-size: 16.900px; letter-spacing: -.05px; color: #666; white-space: nowrap; }
.az-name { color: #1560cc; font-size: 17.500px; letter-spacing: 0; }
.search { width: 251px; height: 41px; border: 1.500px solid #555; border-radius: 3px; background: #fff; display: flex; align-items: center; gap: 11px; padding-left: 10px; font-size: 16.900px; }
.avatar { width: 40px; height: 40px; border-radius: 50%; background: #0b3c17; color: #c8d8cc; line-height: 40px; text-align: center; font-size: 16px; }

.body { flex: 1; min-height: 0; display: grid; grid-template-columns: 327px 1480px; }
.sidebar { background: #e3e3e4; border-right: 2px solid #d2d2d3; display: flex; flex-direction: column; font-size: 17.050px; color: #303030; white-space: nowrap; }
.sidebar strong { color: #151515; }
.project { height: 60px; flex: none; margin: 0 14px 0 12px; border-bottom: 2px solid #cbcbcc; display: grid; grid-template-columns: 46px 225px 21px; align-items: center; padding-left: 2px; }
.badge-i { width: 32px; height: 31px; border-radius: 5px; background: #0e7158; color: #9fcbc0; text-align: center; line-height: 30px; font-size: 15px; }
.nav-scroll { height: 695px; flex: none; display: flex; }
.nav-list { width: 302px; overflow: hidden; }
.nav-overview, .nav-head { display: grid; grid-template-columns: 45px 1fr; align-items: center; }
.nav-overview { height: 65px; padding: 7px 0 0 14px; }
.nav-head { height: 62px; padding-left: 10px; }
.nav-group { border-left: 4px solid #a0a0a2; background: #d9d9da; height: 640px; }
.nav-item { height: 50.200px; display: grid; grid-template-columns: 40px 1fr; align-items: center; padding-left: 15px; }
.nav-on { background: #c9c9cb; margin-left: -4px; padding-left: 15px; border-left: 4px solid #1460cc; }
.nav-cut { padding-top: 14px; align-items: start; }
.scrollbar { width: 8px; height: 448px; margin: 14px 0 0 8px; border-radius: 4px; background: #b1b1b3; }
.settings { flex: 1; margin: 3px 14px 0 12px; border-top: 2px solid #d2d2d3; display: grid; grid-template-columns: 40px 227px 21px; align-items: center; padding: 3px 0 0 7px; }

.page { min-width: 0; padding-left: 14px; white-space: nowrap; }
.title-row { height: 68px; padding: 4px 0 0 12px; display: grid; grid-template-columns: 38px 62px 37px 41px 891px 184px 176px; align-items: center; }
h1 { margin: 0; font-size: 20.500px; font-weight: 500; letter-spacing: -.2px; }
.dates { display: flex; flex-direction: column; margin-top: -5px; }
.range { font-size: 18.500px; font-weight: 300; line-height: 23px; color: #777; }
.remain { font-size: 14.850px; line-height: 19px; color: #555; }

.tab-row { height: 54px; width: 1440px; border-bottom: 2px solid #e6e6e7; padding: 0 0 4px 13px; font-size: 16.650px; display: grid; grid-template-columns: 109px 93px 96px 99px 104px 69px 26px 31px 153px 30px 157px 124px 31px 83px 46px 51px 51px 45px 19px; align-items: center; }
.tab-row strong { align-self: stretch; width: 70px; margin: 0 0 -5px -1px; padding-left: 1px; line-height: 48px; font-size: 16.500px; border-bottom: 4px solid #2a66a8; }
.sep { width: 2px; height: 31px; background: #ccc; }
.blue { color: #2a639c; }

.table { padding: 8px 0 0 11px; }
.row { width: 1429px; height: 37.650px; align-items: center; font-size: 16px; letter-spacing: .02px; display: grid; grid-template-columns: 30px 23px 28px 63px 84px 756px 33px 126px 93px 95px 98px; grid-template-rows: 100%; }
.row > * { grid-row: 1; }
.head { height: 36px; font-size: 15px; color: #666; }
.c-plus { grid-column: 1; justify-self: start; margin-left: 30px; }
.lit .c-plus { color: #2a66a8; }
.head .c-minus { grid-column: 2 / 4; margin-left: 23px; justify-self: start; }
.c-order { grid-column: 4; }
.c-id { grid-column: 5; }
.c-title { grid-column: 6; position: relative; display: flex; align-items: center; padding-left: 9px; }
.head .c-title { padding-left: 24px; }
.leaf { padding-left: 25px; }
.child .c-title { padding-left: 46px; letter-spacing: .06px; }
.c-more { grid-column: 7; }
.c-state { grid-column: 8; }
.c-orig { grid-column: 9; }
.c-eff { grid-column: 10; }
.c-who { grid-column: 11; overflow: hidden; }
.exp { margin-right: 10px; }
.turned { transform: rotate(90deg); }
.c-title > span { margin-left: 7px; }
.child .c-title > span { margin-left: 8px; }
.c-title .hand { position: absolute; left: 11px; top: 8px; }
.lit { background: #eaf1f9; }
.lit .c-title > span { color: #24589a; }
.done, .committed, .todo { display: flex; align-items: center; gap: 7px; }
.done::before, .committed::before, .todo::before { content: ""; width: 10px; height: 10px; border-radius: 50%; background: #2b8436; }
.committed::before { background: #1160cc; }
.todo::before { background: #a5a5a5; }

.dock { position: absolute; left: 482px; top: 1031px; width: 842px; height: 72px; border-radius: 16px; background: linear-gradient(#b9b9ba, #d6d6d8 75%, #e2e2e4); border: 1px solid #cfcfd0; display: flex; padding-left: 3px; }
.app { position: relative; width: 57.750px; display: flex; align-items: center; justify-content: center; height: 62px; flex: none; }
.run::after { content: ""; position: absolute; left: 50%; top: 60px; width: 5px; height: 5px; margin-left: -2px; border-radius: 50%; background: #4b4b4d; }
.tile { width: 45px; height: 45px; border-radius: 10px; background: #fbfbfb; display: flex; align-items: center; justify-content: center; overflow: hidden; position: relative; }
.beta em { position: absolute; left: 0; right: 0; bottom: 0; height: 19px; background: #2a2a2c; color: #eee; font-size: 11px; line-height: 18px; text-align: center; }
.cal { flex-direction: column; justify-content: flex-start; }
.cal em { width: 45px; height: 14px; background: #ea3c41; color: #fff; font-size: 8px; line-height: 15px; text-align: center; flex: none; }
.cal b { font-weight: 400; font-size: 27px; line-height: 29px; letter-spacing: -1px; }
.count { position: absolute; left: 37px; top: 4px; width: 22px; height: 22px; border-radius: 50%; background: #e63440; color: #fff; font-size: 12px; line-height: 22px; text-align: center; }
.ping { width: 13px; height: 13px; left: 44px; top: 4px; }
.skype { width: 44px; height: 44px; border-radius: 18px 22px 16px 22px; background: #1688dc; color: #fff; font-size: 33px; font-weight: 700; line-height: 43px; text-align: center; }
.term { width: 43px; height: 43px; border-radius: 9px; border: 2px solid #333; background: #0f0f10; color: #ddd; font: bold 12px/19px "Liberation Mono", monospace; padding-left: 5px; }
.dock-sep { width: 1px; height: 52px; margin: 8px 0 0 12px; background: #8e8e90; }
.trash { margin-left: 12px; }

.zoombar { grid-column: 1 / 4; background: #1a1a1a; display: grid; grid-template-columns: 54px 69px 61px 547px 37px 45px 62px 115px 121px 109px 556px 82px; justify-content: start; align-items: center; padding-left: 45px; }
.zoombar > svg { margin-top: -2px; }
.people { color: #ccc; font: 16px "Open Sans", sans-serif; margin-top: -8px; }
.leave { align-self: end; width: 82px; height: 30px; border: 0; border-radius: 8px 8px 0 0; background: #b32427; color: #fff; padding: 4px 0 0; font: bold 15px "Open Sans", sans-serif; }
```
